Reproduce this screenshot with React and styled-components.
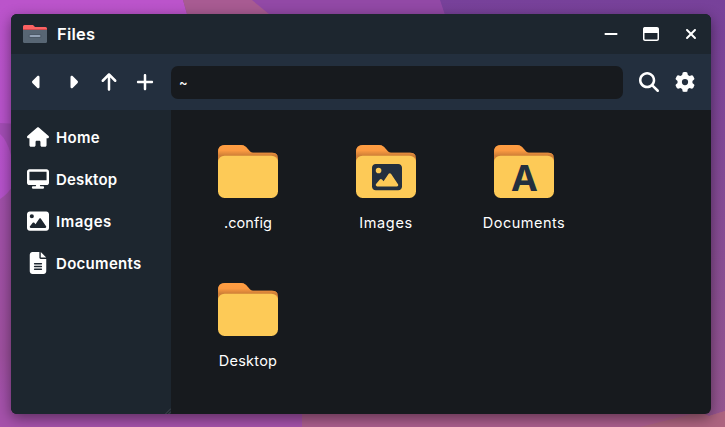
import React from 'react';
import styled, { createGlobalStyle } from 'styled-components';
import {
  FaCaretLeft, FaCaretRight, FaArrowUp, FaPlus, FaMagnifyingGlass, FaGear,
  FaHouse, FaDesktop, FaImage, FaFileLines, FaMinus, FaRegWindowMaximize, FaXmark,
} from 'react-icons/fa6';

const GlobalStyle = createGlobalStyle`
  * { box-sizing: border-box; }
  body { margin: 0; overflow: hidden; background: #93499f; }
  button, input { font: inherit; color: inherit; border: 0; padding: 0; background: none; }
`;

const Screen = styled.div`
  position: relative;
  width: 725px;
  height: 427px;
  padding: 14px 14px 13px 11px;
  overflow: hidden;
  color: #fff;
  font-family: Inter, "Noto Sans", sans-serif;
`;

const WallpaperArt = styled.svg`
  position: absolute;
  inset: 0;
  width: 100%;
  height: 100%;
`;

const Window = styled.section`
  position: relative;
  height: 400px;
  display: flex;
  flex-direction: column;
  overflow: hidden;
  border-radius: 6px;
  background: #171a1e;
  box-shadow: 0 4px 14px rgba(0, 0, 0, 0.45);
`;

const TitleBar = styled.header`
  height: 40px;
  flex: none;
  display: flex;
  align-items: center;
  padding: 0 12px;
  background: #1d262f;
`;

const Title = styled.h1`
  flex: 1;
  margin: 0 0 0 10px;
  font-size: 16.5px;
  line-height: 24px;
  font-weight: 600;
  letter-spacing: 0.2px;
`;

const WindowControls = styled.div`
  display: flex;
  gap: 24px;
`;

const IconButton = styled.button`
  width: ${(p) => p.$size}px;
  height: ${(p) => p.$size}px;
  flex: none;
  display: grid;
  place-items: center;
  font-size: ${(p) => p.$size}px;
`;

const Toolbar = styled.nav`
  height: 56px;
  flex: none;
  display: flex;
  align-items: center;
  gap: 16px;
  padding: 0 16px;
  background: #232f3e;
`;

const PathInput = styled.input`
  flex: 1;
  min-width: 0;
  height: 33px;
  margin-top: 1px;
  padding: 0 8px 2px;
  border-radius: 7px;
  background: #171a1e;
  font-size: 13px;
  font-weight: 500;
  outline: none;
`;

const Body = styled.div`
  flex: 1;
  display: flex;
  min-height: 0;
`;

const Sidebar = styled.aside`
  position: relative;
  width: 160px;
  padding: 6px 16px;
  background: #1d262f;
`;

const Place = styled.a`
  height: 42px;
  display: flex;
  align-items: center;
  gap: 7px;
  font-size: 15px;
  line-height: 21px;
  font-weight: 600;
  letter-spacing: ${(p) => p.$tracking}px;
  svg { width: 22px; height: 22px; flex: none; }
`;

const PlaceName = styled.span`
  padding-top: 1px;
`;

const ResizeGrip = styled.svg`
  position: absolute;
  right: 0;
  bottom: 0;
  width: 6px;
  height: 6px;
`;

const FolderGrid = styled.main`
  flex: 1;
  display: grid;
  grid-template-columns: repeat(3, 138px);
  grid-auto-rows: 138px;
  padding: 8px;
`;

const FolderItem = styled.div`
  display: flex;
  flex-direction: column;
  align-items: center;
  padding-top: 27px;
`;

const FolderFrame = styled.div`
  position: relative;
  width: 60px;
  height: 53px;
  svg { display: block; }
`;

const Emblem = styled.div`
  position: absolute;
  inset: 10px 0 0 1px;
  display: grid;
  place-items: center;
  color: #232f3e;
  font: bold 36.5px/42px "Noto Sans", sans-serif;
`;

const FolderName = styled.span`
  margin-top: 13px;
  font-size: 14.5px;
  line-height: 24px;
  letter-spacing: ${(p) => p.$tracking}px;
`;

function Wallpaper() {
  return (
    <WallpaperArt viewBox="0 0 725 427" preserveAspectRatio="none">
      <defs>
        <linearGradient id="leftGlow" x1="0" y1="0" x2="0" y2="1">
          <stop offset="0" stopColor="#bb54cb" />
          <stop offset="1" stopColor="#b552cb" />
        </linearGradient>
        <linearGradient id="rightShade" x1="0" y1="0" x2="0" y2="1">
          <stop offset="0" stopColor="#77419a" />
          <stop offset="1" stopColor="#965690" />
        </linearGradient>
        <linearGradient id="lowerLeft" x1="0" y1="0" x2="0" y2="1">
          <stop offset="0" stopColor="#a150aa" />
          <stop offset="0.7" stopColor="#9e509f" />
          <stop offset="1" stopColor="#a751b3" />
        </linearGradient>
      </defs>
      <rect width="725" height="427" fill="#9249a6" />
      <path d="M0 0H183L187 14V220H0Z" fill="url(#leftGlow)" />
      <path d="M183 0H252L269 14V60H200Z" fill="#a85b92" />
      <path d="M440 0H725V427H460V60Z" fill="url(#rightShade)" />
      <path d="M0 123L20 124V170L11 155Q7 140 0 134Z" fill="#a34db5" />
      <path d="M0 199Q8 194 14 184V427H0Z" fill="url(#lowerLeft)" />
      <path d="M0 400H302V427H0Z" fill="#a552ab" />
      <path d="M302 400H700V414L709 416L725 411V427H302Z" fill="#ac5e8e" />
      <path d="M640 427L700 412L709 416L725 411V427Z" fill="#ad6480" />
    </WallpaperArt>
  );
}

function AppIcon() {
  return (
    <svg width="24" height="18" viewBox="0 0 24 18">
      <path d="M0 6V1.5Q0 0 1.5 0H10L12 2H22.5Q24 2 24 3.5V6Z" fill="#fb6262" />
      <path d="M0 4H24V5H0Z" fill="#cf4b50" />
      <path d="M0 5H24V16.5Q24 18 22.5 18H1.5Q0 18 0 16.5Z" fill="#586674" />
      <rect x="5.5" y="9" width="13" height="4" rx="2" fill="#4c5967" />
      <rect x="6.5" y="10" width="11" height="2" rx="1" fill="#93a2b5" />
    </svg>
  );
}

function FolderShape({ id }) {
  return (
    <svg width="60" height="53" viewBox="0 0 60 53">
      <defs>
        <linearGradient id={id} x1="0" y1="0" x2="0" y2="1">
          <stop offset="0" stopColor="#ff9d42" />
          <stop offset="0.5" stopColor="#fb9a41" />
          <stop offset="1" stopColor="#cb7d36" />
        </linearGradient>
      </defs>
      <path d="M0 18V7Q0 0 7 0H23Q26 0 28 2L32 6.5Q33.3 7.7 35 7.7H54Q60 7.7 60 13.5V18Z" fill="#d18038" />
      <path d="M0 11V7Q0 0 7 0H23Q26 0 28 2L32 6.5Q33.3 7.7 35 7.7H54Q58.5 7.7 59.6 11Z" fill={`url(#${id})`} />
      <rect y="10.7" width="60" height="42.3" rx="6.5" fill="#fdca57" />
    </svg>
  );
}

const places = [
  { name: 'Home', Icon: FaHouse, tracking: 0.35 },
  { name: 'Desktop', Icon: FaDesktop, tracking: 0.15 },
  { name: 'Images', Icon: FaImage, tracking: 0.5 },
  { name: 'Documents', Icon: FaFileLines, tracking: 0.3 },
];

const folders = [
  { name: '.config', tracking: 0.1 },
  { name: 'Images', emblem: <FaImage size={30} />, tracking: 0.65 },
  { name: 'Documents', emblem: 'A', tracking: 0.5 },
  { name: 'Desktop', tracking: 0.25 },
];

export default function App() {
  return (
    <Screen>
      <GlobalStyle />
      <Wallpaper />
      <Window>
        <TitleBar>
          <AppIcon />
          <Title>Files</Title>
          <WindowControls>
            <IconButton $size={16} aria-label="Minimize"><FaMinus /></IconButton>
            <IconButton $size={16} aria-label="Maximize"><FaRegWindowMaximize /></IconButton>
            <IconButton $size={16} aria-label="Close"><FaXmark /></IconButton>
          </WindowControls>
        </TitleBar>
        <Toolbar>
          <IconButton $size={20} aria-label="Back"><FaCaretLeft /></IconButton>
          <IconButton $size={20} aria-label="Forward"><FaCaretRight /></IconButton>
          <IconButton $size={20} aria-label="Up"><FaArrowUp /></IconButton>
          <IconButton $size={20} aria-label="New"><FaPlus /></IconButton>
          <PathInput defaultValue="~" aria-label="Path" />
          <IconButton $size={20} aria-label="Search"><FaMagnifyingGlass /></IconButton>
          <IconButton $size={20} aria-label="Settings"><FaGear /></IconButton>
        </Toolbar>
        <Body>
          <Sidebar>
            {places.map(({ name, Icon, tracking }) => (
              <Place key={name} $tracking={tracking}>
                <Icon />
                <PlaceName>{name}</PlaceName>
              </Place>
            ))}
            <ResizeGrip viewBox="0 0 6 6">
              <path d="M0.5 6L6 0.5M3.5 6L6 3.5" stroke="#4b535b" strokeWidth="0.8" />
            </ResizeGrip>
          </Sidebar>
          <FolderGrid>
            {folders.map(({ name, emblem, tracking }, i) => (
              <FolderItem key={name}>
                <FolderFrame>
                  <FolderShape id={`folder${i}`} />
                  {emblem && <Emblem>{emblem}</Emblem>}
                </FolderFrame>
                <FolderName $tracking={tracking}>{name}</FolderName>
              </FolderItem>
            ))}
          </FolderGrid>
        </Body>
      </Window>
    </Screen>
  );
}
